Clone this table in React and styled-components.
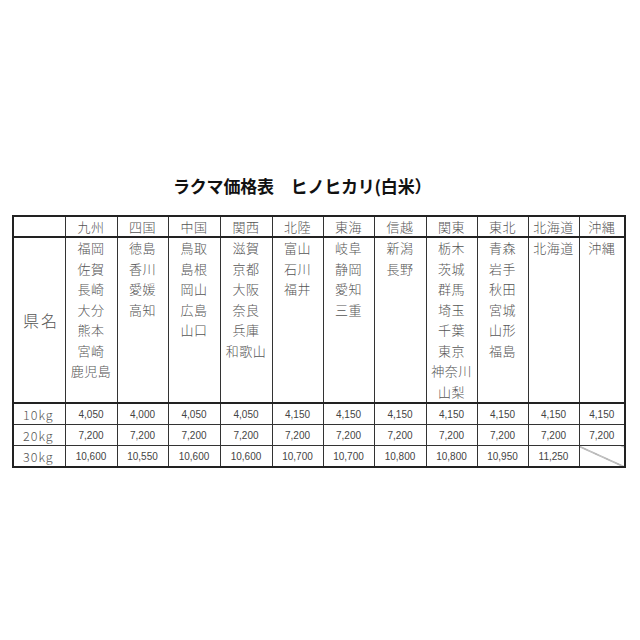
import React from 'react'
import styled, { createGlobalStyle, css } from 'styled-components'

const GlobalStyle = createGlobalStyle`
  html, body {
    margin: 0;
    padding: 0;
    background: #ffffff;
  }
`

const Page = styled.div`
  width: 640px;
  height: 640px;
  padding-top: 176px;
  box-sizing: border-box;
  font-family: "Noto Sans CJK JP", "Noto Sans", sans-serif;
`

const Title = styled.h1`
  margin: 0 0 19px 0;
  padding-left: 173px;
  font-size: 17px;
  line-height: 20px;
  font-weight: 700;
  color: #111;
  letter-spacing: -0.2px;
  white-space: pre;
`

const Table = styled.table`
  margin-left: 12px;
  width: 612px;
  table-layout: fixed;
  border-collapse: collapse;
  border: 2px solid #222;
`

const Cell = styled.td`
  border: 1px solid #333;
  padding: 0;
  text-align: center;
  color: #555;
  font-size: 13px;
  font-weight: 300;
  letter-spacing: 0.5px;
  ${p => p.head && css`
    height: 19px;
    line-height: 19px;
    border-bottom: 2px solid #222;
  `}
  ${p => p.body && css`
    height: 164px;
    vertical-align: top;
    line-height: 20.5px;
  `}
  ${p => p.price && css`
    height: 20px;
    font-family: "Liberation Sans", Arial, sans-serif;
    font-size: 10px;
    font-weight: 400;
    letter-spacing: 0;
    color: #444;
  `}
  ${p => p.first && css`
    border-top: 2px solid #222;
  `}
  ${p => p.slash && css`
    background: linear-gradient(to top right, transparent calc(50% - 0.7px), #555 50%, transparent calc(50% + 0.7px));
  `}
`

const LabelCell = styled.td`
  border: 1px solid #333;
  padding: 0 0 0 9px;
  text-align: left;
  color: #555;
  font-size: 12.5px;
  font-weight: 300;
  letter-spacing: 1px;
  ${p => p.big && css`
    font-size: 16px;
    letter-spacing: 2px;
  `}
  ${p => p.first && css`
    border-top: 2px solid #222;
  `}
`

const Line = styled.div`
  white-space: nowrap;
`

const widths = [52, 52, 51, 52, 52, 51, 51, 52, 51, 51, 51, 46]

const regions = [
  { name: '九州', prefs: ['福岡', '佐賀', '長崎', '大分', '熊本', '宮崎', '鹿児島'], p: ['4,050', '7,200', '10,600'] },
  { name: '四国', prefs: ['徳島', '香川', '愛媛', '高知'], p: ['4,000', '7,200', '10,550'] },
  { name: '中国', prefs: ['鳥取', '島根', '岡山', '広島', '山口'], p: ['4,050', '7,200', '10,600'] },
  { name: '関西', prefs: ['滋賀', '京都', '大阪', '奈良', '兵庫', '和歌山'], p: ['4,050', '7,200', '10,600'] },
  { name: '北陸', prefs: ['富山', '石川', '福井'], p: ['4,150', '7,200', '10,700'] },
  { name: '東海', prefs: ['岐阜', '静岡', '愛知', '三重'], p: ['4,150', '7,200', '10,700'] },
  { name: '信越', prefs: ['新潟', '長野'], p: ['4,150', '7,200', '10,800'] },
  { name: '関東', prefs: ['栃木', '茨城', '群馬', '埼玉', '千葉', '東京', '神奈川', '山梨'], p: ['4,150', '7,200', '10,800'] },
  { name: '東北', prefs: ['青森', '岩手', '秋田', '宮城', '山形', '福島'], p: ['4,150', '7,200', '10,950'] },
  { name: '北海道', prefs: ['北海道'], p: ['4,150', '7,200', '11,250'] },
  { name: '沖縄', prefs: ['沖縄'], p: ['4,150', '7,200', null] },
]

const weights = ['10kg', '20kg', '30kg']

const App = () => {
  return (
    <Page>
      <GlobalStyle />
      <Title>{'ラクマ価格表　ヒノヒカリ(白米）'}</Title>
      <Table>
        <colgroup>
          {widths.map((w, i) => <col key={i} style={{ width: w }} />)}
        </colgroup>
        <tbody>
          <tr>
            <Cell head />
            {regions.map(r => <Cell head key={r.name}>{r.name}</Cell>)}
          </tr>
          <tr>
            <LabelCell big>県名</LabelCell>
            {regions.map(r => (
              <Cell body key={r.name}>
                {r.prefs.map(pref => <Line key={pref}>{pref}</Line>)}
              </Cell>
            ))}
          </tr>
          {weights.map((w, wi) => (
            <tr key={w}>
              <LabelCell first={wi === 0}>{w}</LabelCell>
              {regions.map(r => (
                <Cell price first={wi === 0} slash={r.p[wi] === null} key={r.name}>
                  {r.p[wi]}
                </Cell>
              ))}
            </tr>
          ))}
        </tbody>
      </Table>
    </Page>
  )
}

export default App
